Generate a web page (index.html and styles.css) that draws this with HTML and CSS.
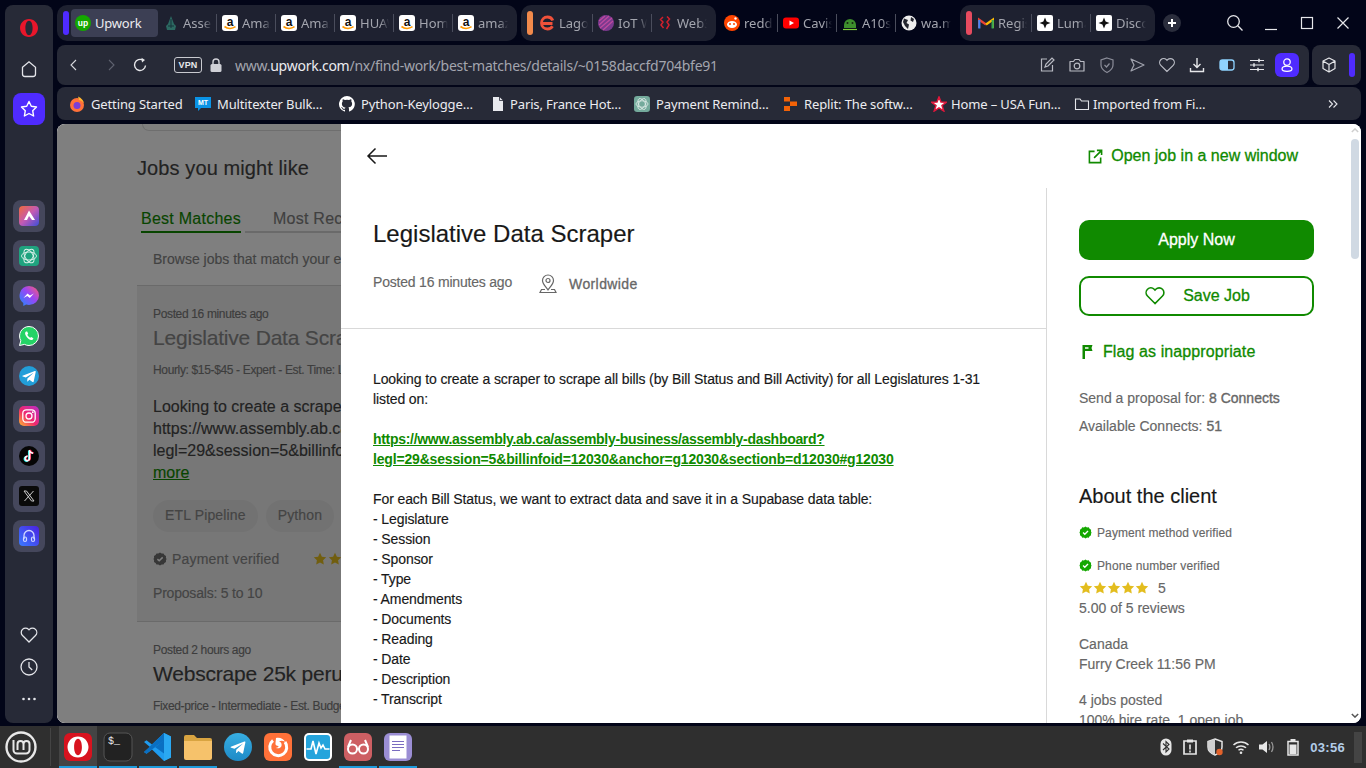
FILE: index.html
```html
<!DOCTYPE html>
<html lang="en">
<head>
<meta charset="utf-8">
<title>Upwork - Legislative Data Scraper</title>
<link rel="stylesheet" href="styles.css">
</head>
<body>
<svg class="sprite" aria-hidden="true">
  <symbol id="amazon" viewBox="0 0 16 16">
    <rect width="16" height="16" rx="3" fill="#fff"/>
    <text x="8" y="10.5" text-anchor="middle" font-family="Liberation Sans" font-weight="700" font-size="12" fill="#111">a</text>
    <path d="M2.5 11.5c3 2.3 7.5 2.6 11 .2" fill="none" stroke="#f90" stroke-width="1.6"/>
  </symbol>
  <symbol id="luma" viewBox="0 0 16 16">
    <rect width="16" height="16" rx="2" fill="#fff"/>
    <path d="M8 2.5 9.6 6.4 13.5 8 9.6 9.6 8 13.5 6.4 9.6 2.5 8 6.4 6.4z" fill="#111"/>
  </symbol>
  <symbol id="gpt" viewBox="0 0 20 20">
    <g fill="none" stroke="#fff" stroke-width=".9" opacity=".85">
      <ellipse cx="10" cy="10" rx="7.5" ry="4"/>
      <ellipse cx="10" cy="10" rx="7.5" ry="4" transform="rotate(60 10 10)"/>
      <ellipse cx="10" cy="10" rx="7.5" ry="4" transform="rotate(120 10 10)"/>
    </g>
  </symbol>
  <symbol id="plane" viewBox="0 0 20 20">
    <path d="M3.5 9.8 15.8 5c.6-.2 1.1.1.9.9l-2 9.6c-.2.7-.6.8-1.200.5l-3.100-2.300-1.500 1.500c-.2.2-.4.3-.7.300l.2-3.100 5.700-5.100c.2-.2 0-.3-.3-.1L6.800 11.600l-3-1c-.7-.2-.7-.6-.3-.8z" fill="#fff"/>
  </symbol>
  <symbol id="star" viewBox="0 0 14 14">
    <path d="M7 .8 8.900 4.700 13.200 5.300 10.100 8.300 10.800 12.600 7 10.600 3.200 12.600 3.900 8.300.8 5.300 5.100 4.700z" fill="#e3bd1e"/>
  </symbol>
  <symbol id="check" viewBox="0 0 14 14">
    <path d="M7 .5 8.600 1.500 10.500 1.400 11.400 3 13 4 12.900 5.800 13.500 7 12.900 8.700 13 10 11.400 11 10.500 12.600 8.700 12.500 7 13.500 5.400 12.500 3.500 12.600 2.600 11 1 10 1.100 8.300.5 7 1.100 5.700 1 4 2.600 3 3.500 1.400 5.300 1.500z" fill="currentColor"/>
    <path d="M4.400 7.100 6.200 8.800 9.700 5.400" fill="none" stroke="#fff" stroke-width="1.500"/>
  </symbol>
</svg>

<div class="desktop">
  <aside class="sidebar">
    <svg class="op-logo" viewBox="0 0 20 20"><path fill="#e9162b" fill-rule="evenodd" d="M10 1c5 0 9 4 9 9s-4 9-9 9-9-4-9-9 4-9 9-9zm0 1.800c-2.200 0-3.600 3.200-3.600 7.200s1.400 7.200 3.600 7.200 3.600-3.200 3.600-7.200-1.400-7.200-3.600-7.200z"/></svg>
    <svg class="side-home" viewBox="0 0 20 20"><path d="M3.500 8.300 10 2.800l6.500 5.500V15a2.500 2.500 0 0 1-2.500 2.500H6A2.500 2.500 0 0 1 3.500 15z" fill="none" stroke="#e4e5ea" stroke-width="1.300"/></svg>
    <div class="side-active"><svg viewBox="0 0 20 20"><path d="M10 2.500 12.300 7.300 17.500 8 13.700 11.700 14.600 17 10 14.500 5.400 17 6.300 11.700 2.500 8 7.700 7.300z" fill="none" stroke="#fff" stroke-width="1.400" stroke-linejoin="round"/></svg></div>
    <div class="side-apps">
      <div class="app"><svg viewBox="0 0 20 20"><defs><linearGradient id="ar" x1="0" y1="0" x2="1" y2="1"><stop offset="0" stop-color="#f26b3a"/><stop offset=".5" stop-color="#c25ab5"/><stop offset="1" stop-color="#3b4fd8"/></linearGradient></defs><rect width="20" height="20" rx="4" fill="url(#ar)"/><path d="M10 4.500 5 14h3l2-4 3 4h3z" fill="#fff"/></svg></div>
      <div class="app"><svg viewBox="0 0 20 20"><rect width="20" height="20" rx="4" fill="#1fa37f"/><use href="#gpt"/></svg></div>
      <div class="app"><svg viewBox="0 0 20 20"><defs><linearGradient id="ms" x1="0" y1="1" x2="1" y2="0"><stop offset="0" stop-color="#1e8bff"/><stop offset=".55" stop-color="#9a45f5"/><stop offset="1" stop-color="#ff5e6c"/></linearGradient></defs><path d="M10 0a10 9.500 0 0 1 0 19c-1 0-2-.1-2.900-.4L4.300 20v-3A9.500 9.500 0 0 1 10 0z" fill="url(#ms)"/><path d="M4.500 12 8.500 7.500l2.500 2 3.800-2-4 4.600-2.500-2z" fill="#fff"/></svg></div>
      <div class="app"><svg viewBox="0 0 20 20"><path d="M10 .5a9.500 9.500 0 0 1 0 19c-1.600 0-3.100-.4-4.500-1.100L.5 19.500l1.300-4.800A9.500 9.500 0 0 1 10 .5z" fill="#25d366" stroke="#fff" stroke-width="1"/><path d="M7 5.500c-1.200 1-1.200 2.600.2 4.800 1.500 2.300 3.600 3.800 5.200 3.700 1 0 2-1 2-1.800l-2.200-1.300-1 .9c-1.200-.5-2.300-1.700-2.900-3l.9-1-1-2.200z" fill="#fff"/></svg></div>
      <div class="app"><svg viewBox="0 0 20 20"><circle cx="10" cy="10" r="10" fill="#229ed9"/><use href="#plane"/></svg></div>
      <div class="app"><svg viewBox="0 0 20 20"><defs><linearGradient id="ig" x1="0" y1="1" x2="1" y2="0"><stop offset="0" stop-color="#fdb62f"/><stop offset=".45" stop-color="#f0286e"/><stop offset="1" stop-color="#b92ec9"/></linearGradient></defs><rect width="20" height="20" rx="5" fill="url(#ig)"/><rect x="3.800" y="3.800" width="12.400" height="12.400" rx="3.500" fill="none" stroke="#fff" stroke-width="1.300"/><circle cx="10" cy="10" r="3" fill="none" stroke="#fff" stroke-width="1.300"/><circle cx="13.800" cy="6.200" r=".9" fill="#fff"/></svg></div>
      <div class="app"><svg viewBox="0 0 20 20"><circle cx="10" cy="10" r="10" fill="#050505"/><path d="M10.500 4v8.500a2.200 2.200 0 1 1-2-2.200" fill="none" stroke="#25f4ee" stroke-width="1.700" transform="translate(-.7 .4)"/><path d="M10.500 4v8.500a2.200 2.200 0 1 1-2-2.200M10.500 4c.2 1.800 1.500 3 3.500 3.200" fill="none" stroke="#fe2c55" stroke-width="1.700" transform="translate(.7 -.2)"/><path d="M10.500 4v8.500a2.200 2.200 0 1 1-2-2.200M10.500 4c.2 1.800 1.500 3 3.500 3.200" fill="none" stroke="#fff" stroke-width="1.500"/></svg></div>
      <div class="app"><svg viewBox="0 0 20 20"><rect width="20" height="20" rx="3" fill="#0a0a0a"/><path d="M5 5h2.500l7.500 10h-2.500zM14.500 5 5.500 15" fill="none" stroke="#ccc" stroke-width="1"/></svg></div>
      <div class="app"><svg viewBox="0 0 20 20"><defs><linearGradient id="hp" x1="0" y1="1" x2="1" y2="0"><stop offset="0" stop-color="#3a7bff"/><stop offset="1" stop-color="#4b20e0"/></linearGradient></defs><rect width="20" height="20" rx="4" fill="url(#hp)"/><path d="M5 13V9.500a5 5 0 0 1 10 0V13" fill="none" stroke="#cfd6ff" stroke-width="1.300"/><rect x="4.500" y="11" width="3" height="4.500" rx="1.500" fill="none" stroke="#cfd6ff" stroke-width="1.200"/><rect x="12.500" y="11" width="3" height="4.500" rx="1.500" fill="none" stroke="#cfd6ff" stroke-width="1.200"/></svg></div>
    </div>
    <div class="side-bottom">
      <svg viewBox="0 0 20 20"><path d="M10 17 3.500 10.500a4.300 4.300 0 0 1 6.100-6.100l.4.400.4-.4a4.300 4.300 0 0 1 6.100 6.100z" fill="none" stroke="#e4e5ea" stroke-width="1.300"/></svg>
      <svg viewBox="0 0 20 20"><circle cx="10" cy="10" r="8" fill="none" stroke="#e4e5ea" stroke-width="1.300"/><path d="M10 5v5l3.200 3" fill="none" stroke="#e4e5ea" stroke-width="1.300"/></svg>
      <svg viewBox="0 0 20 20"><circle cx="4.500" cy="10" r="1.300" fill="#e4e5ea"/><circle cx="10" cy="10" r="1.300" fill="#e4e5ea"/><circle cx="15.500" cy="10" r="1.300" fill="#e4e5ea"/></svg>
    </div>
  </aside>

  <div class="browser">
    <div class="tabstrip">
      <div class="group group-one">
        <span class="marker marker-purple"></span>
        <div class="tab tab-active">
          <svg class="fav" viewBox="0 0 16 16"><circle cx="8" cy="8" r="8" fill="#14a800"/><text x="8" y="10.500" text-anchor="middle" font-family="Liberation Sans" font-weight="700" font-size="8.500" fill="#fff">up</text></svg>
          <span class="tab-title">Upwork</span>
        </div>
        <div class="tab">
          <svg class="fav" viewBox="0 0 16 16"><path d="M8 1 11 9 13 11 12 15H4L3 11 5 9z" fill="#2c6a62"/><path d="M8 4v9M5 11h6" stroke="#16323a" stroke-width="1"/></svg>
          <span class="tab-title">Assembly</span>
        </div>
        <div class="tab"><svg class="fav"><use href="#amazon"/></svg><span class="tab-title">Amazon</span></div>
        <div class="tab"><svg class="fav"><use href="#amazon"/></svg><span class="tab-title">Amazon</span></div>
        <div class="tab"><svg class="fav"><use href="#amazon"/></svg><span class="tab-title">HUAWEI</span></div>
        <div class="tab"><svg class="fav"><use href="#amazon"/></svg><span class="tab-title">Home</span></div>
        <div class="tab tab-last"><svg class="fav"><use href="#amazon"/></svg><span class="tab-title">amazon</span></div>
      </div>
      <div class="group">
        <span class="marker marker-orange"></span>
        <div class="tab"><svg class="fav" viewBox="0 0 16 16"><path d="M13.500 8.500H2.800M13.800 5.500C12.800 3 10.800 2 8.500 2 5 2 2.500 4.500 2.500 8s2.500 6 6 6c2.300 0 4-1 5-2.700" fill="none" stroke="#f0513a" stroke-width="2.800"/></svg><span class="tab-title">Lago</span></div>
        <div class="tab"><svg class="fav" viewBox="0 0 16 16"><circle cx="8" cy="8" r="8" fill="#7b3a8f"/><path d="M1 10 11 1M2 13 14 3M5 15 15 6M1 6 7 1" stroke="#c04a9f" stroke-width="1.200"/></svg><span class="tab-title">IoT World</span></div>
        <div class="tab tab-last"><svg class="fav" viewBox="0 0 16 16"><path d="M6 2 3.500 4.500 6 7 4 10 6.500 13M10 1.500 12.500 4 10 7 12 10 9.500 14" fill="none" stroke="#d2202c" stroke-width="1.500"/></svg><span class="tab-title">Web3</span></div>
      </div>
      <div class="group-free">
        <div class="tab"><svg class="fav" viewBox="0 0 16 16"><circle cx="8" cy="8" r="8" fill="#ff4500"/><ellipse cx="8" cy="9.500" rx="5" ry="3.500" fill="#fff"/><circle cx="6" cy="9" r="1" fill="#ff4500"/><circle cx="10" cy="9" r="1" fill="#ff4500"/><circle cx="11.500" cy="3.500" r="1.200" fill="#fff"/></svg><span class="tab-title">reddit</span></div>
        <div class="tab"><svg class="fav" viewBox="0 0 16 16"><rect y="2.500" width="16" height="11" rx="3" fill="#f00"/><path d="M6.500 5.500 11 8l-4.500 2.500z" fill="#fff"/></svg><span class="tab-title">Cavista</span></div>
        <div class="tab"><svg class="fav" viewBox="0 0 16 16"><path d="M2 10a6 6 0 0 1 12 0v3H2z" fill="#3e8e2d"/><circle cx="5.500" cy="8" r="1" fill="#14240f"/><circle cx="10.500" cy="8" r="1" fill="#14240f"/><path d="M1 14.500h14" stroke="#7ecb3a" stroke-width="1.200"/></svg><span class="tab-title">A10s</span></div>
        <div class="tab tab-last"><svg class="fav" viewBox="0 0 16 16"><circle cx="8" cy="8" r="7.500" fill="#eee"/><path d="M3 3.500 7 5 5.500 8 8 9.500 7 14 4 11 2 7zM10 2 13 4 12 7 9.500 5.500z" fill="#24262f"/></svg><span class="tab-title">wa.me</span></div>
      </div>
      <div class="group group-three">
        <span class="marker marker-red"></span>
        <div class="tab"><svg class="fav" viewBox="0 0 16 16"><path d="M1 13V4.500L8 9.500" fill="none" stroke="#ea4335" stroke-width="2.200"/><path d="M15 13V4.500L8 9.500" fill="none" stroke="#fbbc04" stroke-width="2.200"/><path d="M1.300 13.500V5" stroke="#4285f4" stroke-width="2.200"/><path d="M14.700 13.500V5" stroke="#34a853" stroke-width="2.200"/></svg><span class="tab-title">Register</span></div>
        <div class="tab"><svg class="fav"><use href="#luma"/></svg><span class="tab-title">Luma</span></div>
        <div class="tab tab-last"><svg class="fav"><use href="#luma"/></svg><span class="tab-title">Discover</span></div>
      </div>
      <div class="newtab"><svg viewBox="0 0 10 10"><path d="M5 1v8M1 5h8" stroke="#fff" stroke-width="2"/></svg></div>
      <div class="winctl">
        <svg viewBox="0 0 18 18"><circle cx="7.500" cy="7.500" r="5.800" fill="none" stroke="#e6e7ea" stroke-width="1.300"/><path d="M11.800 11.800 16.500 16.500" stroke="#e6e7ea" stroke-width="1.300"/></svg>
        <svg viewBox="0 0 18 18"><path d="M3 15.500h12" stroke="#e6e7ea" stroke-width="1.200"/></svg>
        <svg viewBox="0 0 18 18"><rect x="3.500" y="3.500" width="11" height="11" fill="none" stroke="#e6e7ea" stroke-width="1.200"/></svg>
        <svg viewBox="0 0 18 18"><path d="M3.500 3.500 14.500 14.500M14.500 3.500 3.500 14.500" stroke="#e6e7ea" stroke-width="1.200"/></svg>
      </div>
    </div>

    <div class="addr-row">
      <div class="addrbar">
        <svg class="nav nav-back" viewBox="0 0 20 20"><path d="M12 5 7 10l5 5" fill="none" stroke="#d8d9de" stroke-width="1.100"/></svg>
        <svg class="nav nav-fwd" viewBox="0 0 20 20"><path d="M8 5l5 5-5 5" fill="none" stroke="#5f626f" stroke-width="1.100"/></svg>
        <svg class="nav nav-reload" viewBox="0 0 20 20"><path d="M15.500 10.500A5.500 5.500 0 1 1 13 5.300" fill="none" stroke="#e6e7ea" stroke-width="1.400"/><path d="M11.500 2.800 15 5l-3 2.500z" fill="#e6e7ea"/></svg>
        <span class="vpn">VPN</span>
        <svg class="lock" viewBox="0 0 14 14"><rect x="1.500" y="6" width="11" height="8" rx="1.500" fill="#cfd0d6"/><path d="M4 6.500V4a3 3 0 0 1 6 0v2.500" fill="none" stroke="#cfd0d6" stroke-width="1.400"/></svg>
        <span class="url">www.<b class="url-host">upwork.com</b>/nx/find-work/best-matches/details/~0158daccfd704bfe91</span>
        <div class="addr-tools">
          <svg viewBox="0 0 20 20"><path d="M10 4H4.500v12h11v-6" fill="none" stroke="#b9bbc4" stroke-width="1.200"/><path d="M8 12l1-3 6-6 2 2-6 6z" fill="none" stroke="#b9bbc4" stroke-width="1.200"/></svg>
          <svg viewBox="0 0 20 20"><path d="M3 6.500h3.500L8 4.500h4l1.500 2H17v9.500H3z" fill="none" stroke="#b9bbc4" stroke-width="1.200" stroke-linejoin="round"/><circle cx="10" cy="11" r="2.800" fill="none" stroke="#b9bbc4" stroke-width="1.200"/></svg>
          <svg viewBox="0 0 20 20"><path d="M10 3 16 5v5c0 4-3 6-6 7.500C7 16 4 14 4 10V5z" fill="none" stroke="#8b8d99" stroke-width="1.200"/><path d="M7.500 10l2 2 3-3.500" fill="none" stroke="#8b8d99" stroke-width="1.200"/></svg>
          <svg viewBox="0 0 20 20"><path d="M4 4 17 10 4 16l3-6z" fill="none" stroke="#a0a2ad" stroke-width="1.200" stroke-linejoin="round"/></svg>
          <svg viewBox="0 0 20 20"><path d="M10 16.500 3.800 10.300a3.900 3.900 0 0 1 5.600-5.600l.6.600.6-.6a3.900 3.900 0 0 1 5.600 5.600z" fill="none" stroke="#b9bbc4" stroke-width="1.200"/></svg>
          <svg viewBox="0 0 20 20"><path d="M10 3v9M6.500 9 10 12.500 13.500 9" fill="none" stroke="#e6e7ea" stroke-width="1.400"/><path d="M3.500 13v3.500h13V13" fill="none" stroke="#e6e7ea" stroke-width="1.400"/></svg>
          <svg viewBox="0 0 20 20"><rect x="3" y="5" width="14" height="10" rx="2.500" fill="none" stroke="#8fd3ff" stroke-width="1.300"/><path d="M3 7.500A2.500 2.500 0 0 1 5.500 5H11v10H5.500A2.500 2.500 0 0 1 3 12.500z" fill="#8fd3ff"/></svg>
          <svg viewBox="0 0 20 20"><path d="M3 5.500h14M3 10h14M3 14.500h14" stroke="#e6e7ea" stroke-width="1.200"/><path d="M12 3.800v3.400M7 8.300v3.400M11 12.800v3.400" stroke="#e6e7ea" stroke-width="1.500"/></svg>
          <div class="profile"><svg viewBox="0 0 20 20"><circle cx="10" cy="6.800" r="3.600" fill="none" stroke="#fff" stroke-width="1.400"/><path d="M4.500 14.500c0-2 1.800-3.200 5.500-3.200s5.500 1.200 5.500 3.200-1.500 2.500-5.500 2.500-5.500-.5-5.500-2.500z" fill="none" stroke="#fff" stroke-width="1.400"/></svg></div>
        </div>
      </div>
      <div class="extbox">
        <svg viewBox="0 0 18 18"><path d="M9 2 15 5v7.500L9 16 3 12.500V5zM3 5l6 3.500L15 5M9 8.500V16" fill="none" stroke="#e6e7ea" stroke-width="1.200" stroke-linejoin="round"/></svg>
        <span class="marker marker-purple"></span>
      </div>
    </div>

    <div class="bookmarks">
      <div class="bm"><svg class="fav" viewBox="0 0 16 16"><circle cx="8" cy="9" r="7" fill="#ff7139"/><circle cx="8" cy="9.500" r="3.500" fill="#7a3ed6"/><path d="M9 .5c3.500 1.500 5.500 4 6 7-1-2-3-3-5-3.500z" fill="#ffb62f"/></svg><span>Getting Started</span></div>
      <div class="bm"><svg class="fav" viewBox="0 0 16 16"><path d="M0 1h16v11H6l-3 3v-3H0z" fill="#0a93e6"/><text x="8" y="9" text-anchor="middle" font-family="Liberation Sans" font-size="7" font-weight="700" fill="#fff">MT</text></svg><span>Multitexter Bulk…</span></div>
      <div class="bm"><svg class="fav" viewBox="0 0 16 16"><path fill="#fff" d="M8 0a8 8 0 0 0-2.500 15.600c.4.100.5-.2.500-.4v-1.400c-2.200.5-2.700-1-2.700-1-.4-.9-.9-1.200-.9-1.200-.7-.5.100-.5.100-.5.800.100 1.200.8 1.200.8.700 1.200 1.900.9 2.300.7.100-.5.300-.9.500-1.100-1.800-.2-3.600-.9-3.600-4 0-.9.300-1.600.8-2.100-.1-.2-.4-1 .1-2.100 0 0 .7-.2 2.200.8a7.500 7.500 0 0 1 4 0c1.500-1 2.200-.8 2.200-.8.400 1.100.2 1.900.1 2.100.5.600.8 1.300.8 2.100 0 3.100-1.900 3.700-3.700 3.900.3.300.6.800.6 1.500v2.200c0 .2.100.5.600.4A8 8 0 0 0 8 0z"/></svg><span>Python-Keylogge…</span></div>
      <div class="bm"><svg class="fav" viewBox="0 0 16 16"><path d="M3 1h6.500L13 4.500V15H3z" fill="#e8e9ee"/><path d="M9.500 1v3.500H13" fill="none" stroke="#272a37" stroke-width=".8"/></svg><span>Paris, France Hot…</span></div>
      <div class="bm"><svg class="fav" viewBox="0 0 20 20"><rect width="20" height="20" rx="4" fill="#74aa9c"/><use href="#gpt"/></svg><span>Payment Remind…</span></div>
      <div class="bm"><svg class="fav" viewBox="0 0 16 16"><path d="M1 1h6v4.500H1zM7 5.500h7V10H7zM1 10h6v5H1z" fill="#f26207"/></svg><span>Replit: The softw…</span></div>
      <div class="bm"><svg class="fav" viewBox="0 0 16 16"><path d="M8 1 10 6 15.500 6.200 11 9.500 12.800 15 8 11.800 3.200 15 5 9.500.5 6.200 6 6z" fill="#fff" stroke="#e0163a" stroke-width="1.500"/></svg><span>Home – USA Fun…</span></div>
      <div class="bm bm-folder"><svg class="fav" viewBox="0 0 16 16"><path d="M1.500 3h4.500l1.500 2h7v8.500h-13z" fill="none" stroke="#e4e5ea" stroke-width="1.100"/></svg><span>Imported from Fi…</span></div>
      <svg class="bm-more" viewBox="0 0 12 12"><path d="M2 2.500 5.500 6 2 9.500M6.500 2.500 10 6 6.500 9.500" fill="none" stroke="#e4e5ea" stroke-width="1.100"/></svg>
    </div>

    <main class="page">
      <section class="behind">
        <div class="search-edge"></div>
        <h2 class="jobs-head">Jobs you might like</h2>
        <div class="jobtabs">
          <span class="jobtab jobtab-on">Best Matches</span>
          <span class="jobtab">Most Recent</span>
        </div>
        <p class="browse">Browse jobs that match your experience to a client's hiring preferences.</p>
        <article class="card">
          <p class="small">Posted 16 minutes ago</p>
          <h3 class="card-title">Legislative Data Scraper</h3>
          <p class="small small-hour">Hourly: $15-$45 - Expert - Est. Time: Less than 1 month</p>
          <p class="card-text">Looking to create a scraper to scrape all bills<br>https://www.assembly.ab.ca/assembly-business<br>legl=29&amp;session=5&amp;billinfoid=12030&amp;anchor<br><a class="more">more</a></p>
          <div class="chips"><span class="chip">ETL Pipeline</span><span class="chip">Python</span></div>
          <div class="pay"><svg class="pay-check"><use href="#check"/></svg><span>Payment verified</span><span class="pay-stars"><svg><use href="#star"/></svg><svg><use href="#star"/></svg><svg><use href="#star"/></svg></span></div>
          <p class="proposals">Proposals: <b>5 to 10</b></p>
        </article>
        <p class="small posted-two">Posted 2 hours ago</p>
        <h3 class="card-title title-dark">Webscrape 25k peruvian companies</h3>
        <p class="small small-fixed">Fixed-price - Intermediate - Est. Budget: $50</p>
      </section>

      <section class="panel">
        <div class="panel-main">
          <div class="panel-top">
            <svg class="back" viewBox="0 0 22 18"><path d="M21 9H2M9.500 1.500 2 9l7.500 7.500" fill="none" stroke="#181818" stroke-width="1.500"/></svg>
            <a class="open-link"><svg viewBox="0 0 16 16"><path d="M7 2.500H1.500v12h12V9" fill="none" stroke="#108a00" stroke-width="1.700"/><path d="M6.500 9.500 14 2M9.500 1.500h5v5" fill="none" stroke="#108a00" stroke-width="1.700"/></svg>Open job in a new window</a>
          </div>
          <div class="panel-grid">
            <div class="col-main">
              <header class="job-head">
                <h1 class="job-title">Legislative Data Scraper</h1>
                <div class="job-meta">
                  <span class="job-posted">Posted 16 minutes ago</span>
                  <svg class="pin" viewBox="0 0 18 20"><path d="M9 1a5.500 5.500 0 0 1 5.500 5.500C14.500 10 11 13 9 16 7 13 3.500 10 3.500 6.500A5.500 5.500 0 0 1 9 1z" fill="none" stroke="#676767" stroke-width="1.200"/><circle cx="9" cy="6.500" r="2" fill="none" stroke="#676767" stroke-width="1.200"/><path d="M6 15.500H2.500L1 18.500h16l-1.500-3H12" fill="none" stroke="#676767" stroke-width="1.200"/></svg>
                  <span class="job-loc">Worldwide</span>
                </div>
              </header>
              <div class="job-body">
                <p>Looking to create a scraper to scrape all bills (by Bill Status and Bill Activity) for all Legislatures 1-31<br>listed on:</p>
                <p class="gap"><a class="job-link"><span class="link-first">https://www.assembly.ab.ca/assembly-business/assembly-dashboard?</span><br>legl=29&amp;session=5&amp;billinfoid=12030&amp;anchor=g12030&amp;sectionb=d12030#g12030</a></p>
                <p class="gap">For each Bill Status, we want to extract data and save it in a Supabase data table:<br>- Legislature<br>- Session<br>- Sponsor<br>- Type<br>- Amendments<br>- Documents<br>- Reading<br>- Date<br>- Description<br>- Transcript</p>
              </div>
            </div>
            <aside class="col-side">
              <div class="btn btn-apply">Apply Now</div>
              <div class="btn btn-save"><svg viewBox="0 0 20 18"><path d="M10 16.500 2.500 9a4.700 4.700 0 0 1 6.700-6.700l.8.800.8-.8A4.700 4.700 0 0 1 17.500 9z" fill="none" stroke="#108a00" stroke-width="1.600"/></svg>Save Job</div>
              <a class="flag"><svg viewBox="0 0 12 14"><path d="M1.500 0h10l-1 3 1 3H4v8H1.500zM4 2.300v1.500h3.500V2.300z" fill="#108a00" fill-rule="evenodd"/></svg>Flag as inappropriate</a>
              <p class="stat stat-send">Send a proposal for: <b>8 Connects</b></p>
              <p class="stat stat-avail">Available Connects: <b>51</b></p>
              <h2 class="about">About the client</h2>
              <p class="verified verified-pay"><svg><use href="#check"/></svg>Payment method verified</p>
              <p class="verified verified-phone"><svg><use href="#check"/></svg>Phone number verified</p>
              <div class="rating"><span class="rating-stars"><svg><use href="#star"/></svg><svg><use href="#star"/></svg><svg><use href="#star"/></svg><svg><use href="#star"/></svg><svg><use href="#star"/></svg></span><span>5</span></div>
              <p class="stat">5.00 of 5 reviews</p>
              <p class="stat stat-group">Canada</p>
              <p class="stat">Furry Creek 11:56 PM</p>
              <p class="stat stat-group">4 jobs posted</p>
              <p class="stat">100% hire rate, 1 open job</p>
            </aside>
          </div>
        </div>
        <div class="scroll">
          <svg class="scroll-arrow" viewBox="0 0 10 6"><path d="M1 5 5 1l4 4" fill="none" stroke="#cfcfcf" stroke-width="1.800"/></svg>
          <div class="scroll-thumb"></div>
          <svg class="scroll-arrow scroll-down" viewBox="0 0 10 6"><path d="M1 1l4 4 4-4" fill="none" stroke="#555" stroke-width="1.800"/></svg>
        </div>
      </section>
    </main>
  </div>
</div>

<footer class="taskbar">
  <svg class="mint" viewBox="0 0 32 32"><circle cx="16" cy="16" r="14.500" fill="none" stroke="#e8e8e8" stroke-width="2.400"/><path d="M8.500 9v10a3.500 3.500 0 0 0 3.500 3.500h9a3.500 3.500 0 0 0 3.500-3.500v-6a3 3 0 0 0-6 0v6M18.500 13a3 3 0 0 0-6 0v6" fill="none" stroke="#e8e8e8" stroke-width="2"/></svg>
  <span class="task-sep"></span>
  <div class="launch">
    <div class="launcher launcher-on launcher-run"><svg viewBox="0 0 30 30"><rect x="1" y="1" width="28" height="28" rx="6" fill="#d8131f"/><path fill="#fff" fill-rule="evenodd" d="M15 4.500c6 0 10.500 4.700 10.500 10.500S21 25.500 15 25.500 4.500 20.800 4.500 15 9 4.500 15 4.500zm0 2.300c-2.400 0-3.900 3.600-3.900 8.200s1.500 8.200 3.900 8.200 3.900-3.600 3.900-8.200-1.500-8.200-3.900-8.200z"/></svg></div>
    <div class="launcher launcher-run"><svg viewBox="0 0 30 30"><rect x="1" y="1" width="28" height="28" rx="6" fill="#222" stroke="#555"/><text x="5" y="12" font-family="Liberation Mono" font-size="10" fill="#eee">$_</text></svg></div>
    <div class="launcher launcher-run"><svg viewBox="0 0 30 30"><path d="M21 1 28 4.500v21L21 29 9 17.500l-5.500 4.200L1 20l6-5-6-5 2.500-1.700L9 12.500z" fill="#1f9cf0"/><path d="M21 8.500 12 15l9 6.500zM21 1v7.500L9 17.500l-5.500 4.200L1 20z" fill="#0a6fc2"/><path d="M21 1 28 4.500v21L21 29z" fill="#2aa8f2"/></svg></div>
    <div class="launcher launcher-run"><svg viewBox="0 0 30 30"><path d="M1 5a2 2 0 0 1 2-2h8l3 3h13a2 2 0 0 1 2 2v18H1z" fill="#d9a441"/><path d="M1 9h28v17a2 2 0 0 1-2 2H3a2 2 0 0 1-2-2z" fill="#f6c26b"/></svg></div>
    <div class="launcher"><svg viewBox="0 0 30 30"><defs><linearGradient id="tg" x1="0" y1="0" x2="0" y2="1"><stop offset="0" stop-color="#37aee2"/><stop offset="1" stop-color="#1e8ac6"/></linearGradient></defs><circle cx="15" cy="15" r="14" fill="url(#tg)"/><use href="#plane" x="4" y="4" width="22" height="22"/></svg></div>
    <div class="launcher"><svg viewBox="0 0 30 30"><rect x="1" y="1" width="28" height="28" rx="6" fill="#ff7139"/><path d="M22 10a8.500 8.500 0 1 1-12-1.500" fill="none" stroke="#fff" stroke-width="3"/><path d="M13 6c4-1 8 1 9 4-2-1.500-4-1.500-6-.5 2 .5 3 2 2.500 4.500-1 2.500-4 3-6 1.500 1.500.5 3 0 3-1.500-2 0-3.500-1-3-3z" fill="#fff"/></svg></div>
    <div class="launcher"><svg viewBox="0 0 30 30"><rect x="1" y="1" width="28" height="28" rx="5" fill="#fff"/><rect x="3" y="3" width="24" height="24" rx="3" fill="#25a4dc"/><path d="M3.500 17H8l2-8 3 13 3-11 2 5 2-3 2 4h4.500" fill="none" stroke="#fff" stroke-width="1.600"/></svg></div>
    <div class="launcher launcher-run"><svg viewBox="0 0 30 30"><rect x="1" y="1" width="28" height="28" rx="6" fill="#cd5f63"/><circle cx="9.500" cy="17" r="4.500" fill="none" stroke="#fff" stroke-width="2"/><circle cx="20.500" cy="17" r="4.500" fill="none" stroke="#fff" stroke-width="2"/><path d="M14 17h2M5 15 8 8M25 15 22 8" fill="none" stroke="#fff" stroke-width="2"/></svg></div>
    <div class="launcher launcher-run"><svg viewBox="0 0 30 30"><rect x="1" y="1" width="28" height="28" rx="6" fill="#9b8ed4"/><rect x="6.500" y="3.500" width="17" height="23" fill="#fff"/><path d="M9 9.500h12M9 12.500h12M9 15.500h12M9 18.500h8" stroke="#7a6cc0" stroke-width="1"/></svg></div>
  </div>
  <div class="tray">
    <svg viewBox="0 0 16 18"><rect x="2.500" y=".5" width="11" height="17" rx="5.500" fill="#e6e6e6"/><path d="M5 5.500 11 11 8 14V3.500L11 6.500 5 12" fill="none" stroke="#2f2f2f" stroke-width="1.100"/></svg>
    <svg viewBox="0 0 16 18"><path d="M2 3h12v13H2z" fill="none" stroke="#e6e6e6" stroke-width="1.700"/><path d="M5 1.500h6v3H5z" fill="#e6e6e6"/><path d="M8 6.500v5M8 12.500v2" stroke="#e6e6e6" stroke-width="1.600"/></svg>
    <svg viewBox="0 0 18 18"><path d="M9 1 16 3.500V9c0 4-3 6.500-7 8C5 15.500 2 13 2 9V3.500z" fill="none" stroke="#e6e6e6" stroke-width="1.500"/><path d="M9 1 2 3.500V9c0 4 3 6.500 7 8z" fill="#cfcfcf"/><circle cx="13.500" cy="14" r="3.200" fill="#e2622b"/></svg>
    <svg viewBox="0 0 18 18"><path d="M1.500 7a11 11 0 0 1 15 0M4 9.800a7.500 7.500 0 0 1 10 0M6.500 12.300a3.800 3.800 0 0 1 5 0" fill="none" stroke="#e6e6e6" stroke-width="1.500"/><circle cx="9" cy="14.800" r="1.300" fill="#e6e6e6"/></svg>
    <svg viewBox="0 0 18 18"><path d="M1 6.500h3.500L9 3v12L4.500 11.500H1z" fill="#e6e6e6"/><path d="M11 6c1 1.800 1 4.200 0 6M13.500 4c1.800 3 1.800 7 0 10" fill="none" stroke="#999" stroke-width="1.300"/></svg>
    <svg viewBox="0 0 14 18"><path d="M2 3.500h10V17H2z" fill="none" stroke="#e6e6e6" stroke-width="1.500"/><path d="M4.500 1h5v2.500h-5zM3.500 6.500h7V16h-7z" fill="#e6e6e6"/></svg>
    <span class="clock">03:56</span>
    <span class="tray-end"></span>
  </div>
</footer>
</body>
</html>
```

FILE: styles.css
```css
* { box-sizing: border-box; }
html, body { margin: 0; padding: 0; }
body { width: 1366px; height: 768px; overflow: hidden; background: #020518; font-family: "Noto Sans", sans-serif; }
p, h1, h2, h3 { margin: 0; font-weight: 400; }
svg { display: block; flex: none; }
.sprite { position: absolute; width: 0; height: 0; }

.desktop { height: 726px; padding: 5px 5px 3px; display: flex; gap: 4px; }

/* sidebar */
.sidebar { width: 48px; background: #272a37; border-radius: 8px; display: flex; flex-direction: column; align-items: center; padding: 13px 0 14px; }
.op-logo { width: 20px; height: 20px; }
.side-home { width: 20px; height: 20px; margin-top: 21px; }
.side-active { width: 32px; height: 32px; margin-top: 14px; background: #4f2bff; border-radius: 8px; display: flex; align-items: center; justify-content: center; }
.side-active svg { width: 20px; height: 20px; }
.side-apps { margin-top: 75px; display: flex; flex-direction: column; gap: 8px; }
.app { width: 32px; height: 32px; background: #45475c; border-radius: 8px; display: flex; align-items: center; justify-content: center; }
.app svg { width: 20px; height: 20px; }
.side-bottom { margin-top: auto; display: flex; flex-direction: column; gap: 12px; }
.side-bottom svg { width: 20px; height: 20px; }

/* browser */
.browser { width: 1304px; display: flex; flex-direction: column; }
.tabstrip { height: 36px; display: flex; align-items: center; gap: 4px; }
.group { height: 36px; background: #1e2130; border-radius: 10px; display: flex; align-items: center; padding: 0 5px 0 6px; }
.group-free { display: flex; align-items: center; width: 236px; margin-left: -1px; margin-right: 1px; }
.group-three { flex: none; }
.marker { width: 6px; height: 24px; border-radius: 3px; flex: none; margin-right: 1px; }
.marker-purple { background: #4f2bff; }
.marker-orange { background: #f28a4b; }
.marker-red { background: #e74b5f; }
.tab { width: 59px; height: 18px; display: flex; align-items: center; gap: 4px; padding-left: 5px; padding-right: 4px; border-right: 1px solid #4a4d5c; overflow: hidden; flex: none; }
.tab-last { border-right: 0; }
.fav { width: 16px; height: 16px; }
.tab-title { font-size: 13px; color: #a3a5ae; white-space: nowrap; overflow: hidden; flex: 1; min-width: 0; -webkit-mask-image: linear-gradient(90deg, #000 70%, transparent); mask-image: linear-gradient(90deg, #000 70%, transparent); }
.tab-active { width: 87px; height: 28px; margin-left: 1px; padding-left: 4px; background: #3c3f54; border: 0; border-radius: 4px; }
.tab-active .tab-title { color: #ececf0; letter-spacing: -.2px; -webkit-mask-image: none; mask-image: none; }
.newtab { width: 18px; height: 18px; margin-left: 4px; border-radius: 50%; background: #2a2d3c; display: flex; align-items: center; justify-content: center; }
.newtab svg { width: 10px; height: 10px; }
.winctl { margin-left: auto; margin-right: 9px; display: flex; gap: 18px; }
.winctl svg { width: 18px; height: 18px; }

.addr-row { height: 40px; margin-top: 4px; display: flex; gap: 3px; }
.addrbar { width: 1252px; background: #272a37; border-radius: 8px; display: flex; align-items: center; }
.nav { width: 20px; height: 20px; }
.nav-back { margin-left: 7px; }
.nav-fwd { margin-left: 17px; }
.nav-reload { margin-left: 9px; }
.vpn { width: 28px; height: 16px; margin-left: 24px; border: 1px solid #c9cad0; border-radius: 3px; color: #e6e7ea; font: 700 9px/14px "Liberation Sans", sans-serif; letter-spacing: .2px; text-align: center; }
.lock { width: 14px; height: 14px; margin-left: 7px; }
.url { margin-left: 12px; font-size: 14px; letter-spacing: -.25px; color: #a3a5ae; white-space: nowrap; }
.url-host { font-weight: 400; color: #ececf0; }
.addr-tools { margin-left: auto; margin-right: 10px; display: flex; align-items: center; gap: 10px; }
.addr-tools svg { width: 20px; height: 20px; }
.profile { width: 24px; height: 24px; margin-left: -2px; background: #4f2bff; border-radius: 6px; display: flex; align-items: center; justify-content: center; }
.profile svg { width: 18px; height: 18px; }
.extbox { width: 49px; background: #272a37; border-radius: 8px; display: flex; align-items: center; padding-left: 8px; gap: 11px; }
.extbox svg { width: 18px; height: 18px; }
.extbox .marker { margin: 0; }

.bookmarks { height: 33px; margin-top: 2px; padding-left: 12px; background: #272a37; border-radius: 8px; display: flex; align-items: center; }
.bm { display: flex; align-items: center; gap: 6px; font-size: 13px; letter-spacing: -.01em; color: #ececf0; white-space: nowrap; flex: none; }
.bm:nth-child(1) { width: 126px; }
.bm:nth-child(2) { width: 144px; }
.bm:nth-child(3) { width: 151px; }
.bm:nth-child(4) { width: 144px; gap: 4px; }
.bm:nth-child(5) { width: 149px; }
.bm:nth-child(6) { width: 148px; gap: 5px; }
.bm:nth-child(7) { width: 143px; gap: 4px; }
.bm-folder { width: 253px; gap: 3px; }
.bm-more { width: 12px; height: 12px; }

/* page */
.page { height: 599px; margin-top: 4px; display: flex; background: #fff; border-radius: 8px; overflow: hidden; }
.behind { width: 284px; flex: none; position: relative; overflow: hidden; background: #fff; white-space: nowrap; font-family: "Liberation Sans", sans-serif; color: #454545; -webkit-text-stroke: .15px; }
.behind::after { content: ""; position: absolute; inset: 0; background: rgba(0, 0, 0, .5); }
.search-edge { width: 400px; height: 7px; margin-left: 85px; border: 1px solid #ddd; border-top: 0; border-radius: 0 0 10px 10px; }
.jobs-head { margin: 23px 0 0 80px; font-size: 20px; line-height: 28px; letter-spacing: .1px; }
.jobtabs { margin: 23px 0 0 84px; display: flex; gap: 4px; width: 500px; }
.jobtab { height: 28px; flex: none; padding-left: 28px; padding-top: 1px; font-size: 16px; line-height: 25px; letter-spacing: .25px; color: #808080; border-bottom: 2px solid #d5d5d5; width: 120px; overflow: hidden; }
.jobtab-on { width: 100px; padding-left: 0; color: #108a00; border-bottom-color: #108a00; }
.browse { margin: 16px 0 0 96px; font-size: 14px; line-height: 20px; color: #848484; }
.card { margin: 16px 0 0 80px; width: 500px; padding: 20px 0 18px 16px; background: #eee; border-top: 1px solid #d5d5d5; border-bottom: 1px solid #d5d5d5; }
.small { font-size: 12px; line-height: 16px; letter-spacing: -.35px; color: #7a7a7a; }
.card-title { font-size: 21px; line-height: 32px; letter-spacing: -.2px; color: #888; }
.small-hour { margin-top: 8px; }
.card-text { margin-top: 18px; font-size: 16px; line-height: 22px; color: #454545; }
.more { color: #108a00; text-decoration: underline; }
.chips { margin-top: 16px; display: flex; gap: 8px; }
.chip { height: 32px; padding: 0 12px; background: #e4e4e4; border-radius: 16px; font-size: 14px; line-height: 31px; letter-spacing: .15px; color: #888; }
.pay { margin-top: 17px; height: 20px; display: flex; align-items: center; font-size: 14px; letter-spacing: .2px; color: #888; }
.pay-check { width: 14px; height: 14px; margin-right: 5px; color: #6e6e6e; }
.pay-stars { margin-left: 34px; display: flex; gap: 1px; }
.pay-stars svg { width: 14px; height: 14px; }
.proposals { margin-top: 14px; font-size: 14px; line-height: 20px; letter-spacing: -.2px; color: #888; }
.proposals b { font-weight: 400; }
.posted-two { margin: 20px 0 0 96px; }
.title-dark { margin: 0 0 0 96px; color: #454545; }
.small-fixed { margin: 8px 0 0 96px; }

.panel { width: 1020px; flex: none; display: flex; background: #fff; font-family: "Liberation Sans", sans-serif; color: #181818; -webkit-text-stroke: .15px; }
.panel-main { width: 1008px; flex: none; overflow: hidden; }
.panel-top { height: 64px; display: flex; align-items: center; justify-content: space-between; padding: 0 51px 0 25px; }
.back { width: 22px; height: 18px; }
.open-link { display: flex; align-items: center; gap: 8px; font-size: 16px; color: #108a00; -webkit-text-stroke: .3px; }
.open-link svg { width: 15px; height: 15px; }
.panel-grid { display: grid; grid-template-columns: 706px 302px; height: 535px; }
.col-main { border-right: 1px solid #d9d9d9; overflow: hidden; }
.job-head { height: 141px; padding: 30px 0 0 32px; border-bottom: 1px solid #d9d9d9; }
.job-title { font-size: 24px; line-height: 32px; }
.job-meta { margin-top: 22px; height: 20px; display: flex; align-items: center; font-size: 14px; color: #676767; }
.job-posted { letter-spacing: -.2px; }
.pin { width: 18px; height: 20px; margin: 4px 0 0 27px; }
.job-loc { margin: 4px 0 0 12px; letter-spacing: .4px; -webkit-text-stroke: .3px; color: #676767; }
.job-body { padding: 40px 0 0 32px; font-size: 14px; line-height: 20px; letter-spacing: -.1px; }
.gap { margin-top: 20px; }
.job-link { color: #108a00; font-weight: 700; letter-spacing: -.17px; -webkit-text-stroke: 0; text-decoration: underline; }
.link-first { letter-spacing: -.3px; }
.col-side { padding: 32px 0 0 32px; font-size: 14px; color: #676767; }
.btn { width: 235px; height: 40px; border-radius: 10px; display: flex; align-items: center; justify-content: center; font-size: 16px; -webkit-text-stroke: .3px; }
.btn-apply { background: #108a00; color: #fff; }
.btn-save { margin-top: 16px; background: #fff; border: 2px solid #108a00; color: #108a00; gap: 18px; padding-left: 2px; }
.btn-save svg { width: 20px; height: 18px; }
.flag { margin-top: 24px; height: 24px; display: flex; align-items: center; gap: 10px; font-size: 16px; letter-spacing: .1px; color: #108a00; padding-left: 2px; -webkit-text-stroke: .3px; }
.flag svg { width: 12px; height: 14px; }
.stat { line-height: 20px; white-space: nowrap; }
.stat b { font-weight: 400; -webkit-text-stroke: .35px; }
.stat-send { margin-top: 24px; }
.stat-avail { margin-top: 8px; }
.about { margin-top: 46px; font-size: 20px; line-height: 28px; color: #181818; }
.verified { display: flex; align-items: center; gap: 5px; height: 16px; font-size: 12px; letter-spacing: .1px; }
.verified svg { width: 13px; height: 13px; color: #14a800; margin-top: -2px; }
.verified-pay { margin-top: 15px; }
.verified-phone { margin-top: 17px; }
.rating { margin-top: 4px; height: 20px; display: flex; align-items: center; gap: 9px; }
.rating-stars { display: flex; }
.rating-stars svg { width: 14px; height: 14px; }
.stat-group { margin-top: 16px; }

.scroll { width: 12px; flex: none; position: relative; display: flex; flex-direction: column; align-items: center; padding-top: 4px; }
.scroll-arrow { width: 8px; height: 5px; }
.scroll-thumb { width: 8px; height: 120px; margin-top: 6px; margin-right: 1px; background: #d0d9e3; border-radius: 4px; }
.scroll-down { margin-top: auto; margin-bottom: 5px; }

/* taskbar */
.taskbar { height: 42px; background: #2f2f2f; display: flex; align-items: stretch; padding-left: 5px; }
.mint { width: 32px; height: 32px; align-self: center; }
.task-sep { width: 1px; height: 38px; align-self: center; margin-left: 13px; background: #444; }
.launch { margin-left: 8px; display: flex; gap: 2px; }
.launcher { width: 38px; display: flex; align-items: center; justify-content: center; padding-top: 1px; border-bottom: 2px solid transparent; }
.launcher svg { width: 30px; height: 30px; }
.launcher-on { background: #444; }
.launcher-run { border-bottom-color: #1d9bdc; }
.tray { margin-left: auto; padding-right: 4px; display: flex; align-items: center; gap: 8px; }
.tray svg { width: 18px; height: 18px; }
.tray svg:nth-child(1) { margin-right: -2px; }
.tray svg:nth-child(2) { margin-right: -1px; }
.clock { font: 700 13px "Liberation Sans", sans-serif; color: #b3cde8; letter-spacing: .3px; }
.tray-end { width: 8px; height: 31px; margin-left: 1px; background: #444; }
```
